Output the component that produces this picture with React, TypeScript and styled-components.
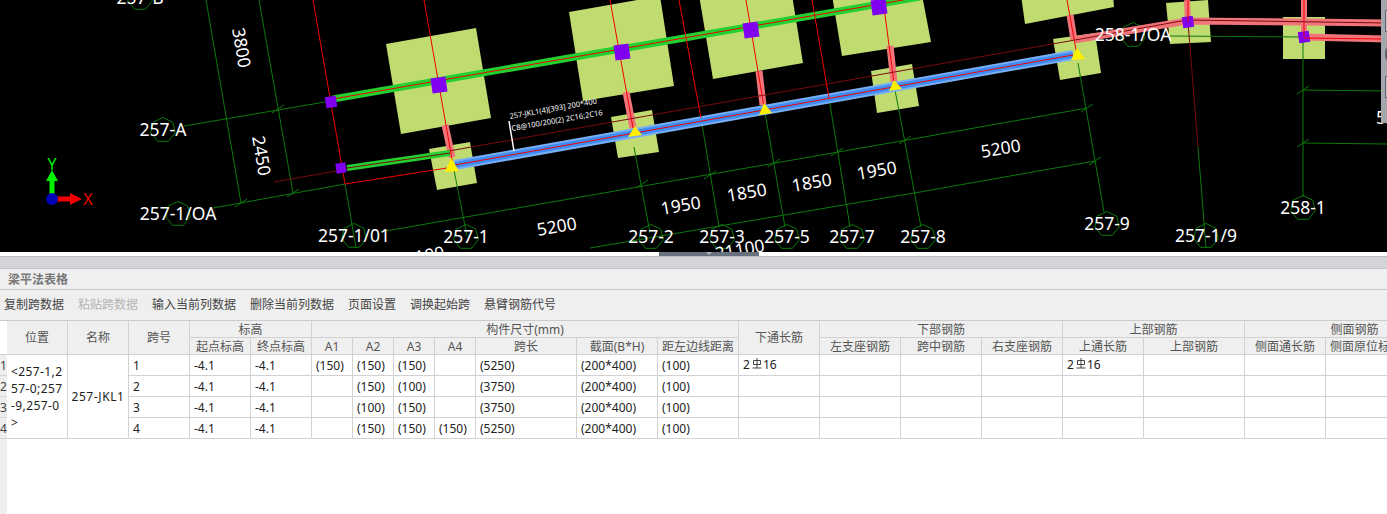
import styled, { createGlobalStyle } from "styled-components";

type Pt = [number, number];

const GREEN = "#0c780c";
const PAD = "#c0dc70";
const RED = "#f00000";
const DARK_RED = "#7a0a0a";
const PINK = "#f0747a";
const PURPLE = "#8000f0";

const pads: Pt[][] = [
  [[386, 44], [476, 28], [491, 118], [401, 134]],
  [[429, 149], [470, 142], [477, 183], [437, 190]],
  [[569, 12], [660, -4], [674, 86], [583, 101]],
  [[611, 117], [652, 110], [659, 152], [618, 158]],
  [[699, -5], [792, -5], [803, 63], [713, 79]],
  [[871, 71], [912, 64], [919, 106], [877, 113]],
  [[832, -5], [922, -5], [931, 42], [842, 56]],
  [[1021, -5], [1113, -5], [1114, 7], [1025, 24]],
  [[1053, 39], [1095, 33], [1101, 73], [1060, 80]],
  [[1166, 3], [1208, 0], [1211, 42], [1170, 44]],
  [[1283, 17], [1325, 17], [1325, 59], [1283, 59]],
];

const greenLines: number[][] = [
  [206, 0, 241, 203],
  [259, 0, 293, 193],
  [184, 126, 325, 102],
  [213, 208, 345, 184],
  [345, 184, 356, 248],
  [453, 165, 467, 236],
  [380, 232, 907, 140],
  [907, 140, 1087, 108],
  [590, 248, 920, 192],
  [920, 192, 1095, 161],
  [634, 147, 650, 233],
  [701, 118, 719, 227],
  [764, 107, 785, 227],
  [829, 98, 850, 227],
  [895, 90, 921, 227],
  [1078, 63, 1104, 212],
  [1198, 147, 1206, 248],
  [1170, 36, 1304, 37],
  [1303, 37, 1303, 197],
  [1303, 90, 1387, 91],
  [1303, 143, 1387, 144],
];

const ticks: Pt[] = [
  [278, 109], [241, 203], [293, 193], [642, 184], [710, 175], [774, 163], [837, 152], [905, 140],
  [1087, 108], [1095, 161], [1303, 90], [1303, 143],
];

const redLines: number[][] = [
  [313, 0, 345, 184],
  [424, 0, 453, 165],
  [610, 0, 633, 128],
  [679, 0, 701, 118],
  [746, 0, 764, 107],
  [812, 0, 829, 98],
  [883, 0, 895, 90],
  [1067, 0, 1077, 55],
  [345, 184, 447, 168],
];

const darkRedLines: number[][] = [
  [274, 182, 1075, 40],
  [1075, 40, 1187, 20],
  [1187, 20, 1387, 23],
  [1188, 22, 1198, 147],
];

const pinkBeams: { points: string; width: number }[] = [
  { points: "445,125 452,157", width: 7 },
  { points: "626,92 633,128", width: 7 },
  { points: "759,71 763,105", width: 7 },
  { points: "890,46 894,82", width: 7 },
  { points: "1070,15 1074,40", width: 7 },
  { points: "1074,40 1187,21 1304,22 1387,23", width: 7 },
  { points: "1304,37 1387,39", width: 7 },
  { points: "1187,0 1188,22", width: 6 },
  { points: "1304,0 1304,37", width: 6 },
];

const columns: { x: number; y: number; s: number }[] = [
  { x: 331, y: 102, s: 11 },
  { x: 341, y: 168, s: 10 },
  { x: 439, y: 85, s: 15 },
  { x: 622, y: 52, s: 15 },
  { x: 751, y: 30, s: 15 },
  { x: 879, y: 7, s: 15 },
  { x: 1188, y: 22, s: 11 },
  { x: 1304, y: 37, s: 11 },
];

const triangles: string[] = [
  "451,158 445,172 459,171",
  "635,126 628,137 642,135",
  "764,103 759,115 772,113",
  "894,80 889,91 902,89",
  "1077,48 1071,60 1085,59",
];

const bubbles: { label: string; x: number; y: number }[] = [
  { label: "257-B", x: 140, y: -2 },
  { label: "257-A", x: 163, y: 130 },
  { label: "257-1/OA", x: 178, y: 214 },
  { label: "257-1/01", x: 354, y: 236 },
  { label: "257-1", x: 466, y: 237 },
  { label: "257-2", x: 651, y: 237 },
  { label: "257-3", x: 722, y: 237 },
  { label: "257-5", x: 787, y: 237 },
  { label: "257-7", x: 852, y: 237 },
  { label: "257-8", x: 923, y: 237 },
  { label: "257-9", x: 1107, y: 224 },
  { label: "257-1/9", x: 1206, y: 236 },
  { label: "258-1", x: 1303, y: 208 },
  { label: "258-1/OA", x: 1133, y: 35 },
];

const dimensions: { label: string; x: number; y: number; angle: number }[] = [
  { label: "3800", x: 240, y: 48, angle: 80 },
  { label: "2450", x: 260, y: 156, angle: 80 },
  { label: "5200", x: 557, y: 228, angle: -10 },
  { label: "1950", x: 681, y: 207, angle: -10 },
  { label: "1850", x: 747, y: 194, angle: -10 },
  { label: "1850", x: 812, y: 184, angle: -10 },
  { label: "1950", x: 877, y: 172, angle: -10 },
  { label: "5200", x: 1001, y: 150, angle: -10 },
  { label: "21100", x: 740, y: 251, angle: -10 },
  { label: "21100", x: 420, y: 258, angle: -10 },
];

function heptagon(cx: number, cy: number, r: number) {
  const pts: string[] = [];
  for (let i = 0; i < 7; i++) {
    const a = (i * 2 * Math.PI) / 7 - Math.PI / 2;
    pts.push(`${(cx + r * Math.cos(a)).toFixed(1)},${(cy + r * Math.sin(a)).toFixed(1)}`);
  }
  return pts.join(" ");
}

function Segments(props: { lines: number[][]; color: string; width?: number }) {
  return (
    <>
      {props.lines.map((l, i) => (
        <line key={i} x1={l[0]} y1={l[1]} x2={l[2]} y2={l[3]} stroke={props.color} strokeWidth={props.width || 1} />
      ))}
    </>
  );
}

function PlanDrawing() {
  return (
    <svg width="1387" height="252" viewBox="0 0 1387 252">
      {pads.map((p, i) => (
        <polygon key={i} points={p.map((c) => c.join(",")).join(" ")} fill={PAD} />
      ))}
      <Segments lines={greenLines} color={GREEN} />
      {ticks.map(([x, y], i) => (
        <line key={i} x1={x - 6} y1={y + 4} x2={x + 6} y2={y - 4} stroke={GREEN} />
      ))}

      {bubbles.map((b) => (
        <polygon key={b.label} points={heptagon(b.x, b.y, 12.5)} fill="none" stroke={GREEN} />
      ))}

      {pinkBeams.map((b, i) => (
        <polyline key={i} points={b.points} fill="none" stroke={PINK} strokeWidth={b.width} />
      ))}
      <Segments lines={darkRedLines} color={DARK_RED} />

      <line x1="333" y1="99" x2="920" y2="-3" stroke="#22d030" strokeWidth="7" />
      <line x1="347" y1="168" x2="450" y2="153" stroke="#22d030" strokeWidth="6" />
      <line x1="333" y1="99" x2="920" y2="-3" stroke={RED} />
      <line x1="347" y1="168" x2="450" y2="153" stroke={DARK_RED} />

      <line x1="455" y1="165" x2="1073" y2="55" stroke="#78aef5" strokeWidth="10" />
      <line x1="455" y1="165" x2="1073" y2="55" stroke="#3f8cf2" strokeWidth="6" />
      <line x1="455" y1="165" x2="1073" y2="55" stroke={RED} />

      <Segments lines={redLines} color={RED} />

      {columns.map((c, i) => (
        <rect
          key={i}
          x={c.x - c.s / 2}
          y={c.y - c.s / 2}
          width={c.s}
          height={c.s}
          fill={PURPLE}
          transform={`rotate(-8 ${c.x} ${c.y})`}
        />
      ))}
      <line x1="1188" y1="0" x2="1188" y2="22" stroke={RED} />
      <line x1="1304" y1="0" x2="1304" y2="37" stroke={RED} />
      <line x1="1304" y1="38" x2="1381" y2="39" stroke={RED} />

      {triangles.map((t, i) => (
        <polygon key={i} points={t} fill="#fff000" />
      ))}

      <g fontFamily='"Noto Sans", sans-serif' fontSize="17.5" fill="#fff">
        {bubbles.map((b) => (
          <text key={b.label} x={b.x} y={b.y + 6} textAnchor="middle">
            {b.label}
          </text>
        ))}
        {dimensions.map((d, i) => (
          <text key={i} x={d.x} y={d.y} textAnchor="middle" dominantBaseline="middle" transform={`rotate(${d.angle} ${d.x} ${d.y})`}>
            {d.label}
          </text>
        ))}
        <text x="1376" y="124">5200</text>
      </g>

      <polyline points="509,121 514,151" fill="none" stroke="#fff" strokeWidth="1.5" />
      <g fontFamily='"Noto Sans", sans-serif' fontSize="7.5" fill="#fff">
        <text transform="translate(510 119) rotate(-10)">257-JKL1(4)[393] 200*400</text>
        <text transform="translate(512 131) rotate(-10)">C8@100/200(2) 2C16;2C16</text>
      </g>

      <line x1="52" y1="194" x2="52" y2="180" stroke="#00f000" strokeWidth="5" />
      <polygon points="46,181 58,181 52,170" fill="#00f000" />
      <line x1="57" y1="199" x2="71" y2="199" stroke="#f00000" strokeWidth="5" />
      <polygon points="70,193 70,205 82,199" fill="#f00000" />
      <circle cx="52" cy="199" r="6" fill="#0000b4" />
      <g fontFamily='"Noto Sans", sans-serif' fontSize="16">
        <text x="52" y="170" textAnchor="middle" fill="#00f000">Y</text>
        <text x="88" y="205" textAnchor="middle" fill="#f00000">X</text>
      </g>
    </svg>
  );
}

function RebarMark() {
  return (
    <RebarSvg width="10" height="11" viewBox="0 0 10 11">
      <path d="M1.5 2.5H8.5V6.5H1.5ZM5 0V10M0.5 10H9.5" fill="none" stroke="#444" />
    </RebarSvg>
  );
}

const actions = [
  { label: "复制跨数据" },
  { label: "粘贴跨数据", disabled: true },
  { label: "输入当前列数据" },
  { label: "删除当前列数据" },
  { label: "页面设置" },
  { label: "调换起始跨" },
  { label: "悬臂钢筋代号" },
];

const widths = [7, 61, 61, 61, 61, 61, 41, 41, 41, 41, 101, 81, 81, 81, 81, 81, 81, 81, 101, 81, 81, 58];

const positionLines = ["<257-1,2", "57-0;257", "-9,257-0", ">"];

const spans = [
  { a1: "(150)", a2: "(150)", a3: "(150)", a4: "", len: "(5250)" },
  { a1: "", a2: "(150)", a3: "(100)", a4: "", len: "(3750)" },
  { a1: "", a2: "(100)", a3: "(150)", a4: "", len: "(3750)" },
  { a1: "", a2: "(150)", a3: "(150)", a4: "(150)", len: "(5250)" },
];

export default function App() {
  return (
    <Page>
      <GlobalStyle />
      <Canvas>
        <PlanDrawing />
        <FloatPanel>
          <PanelBox />
          <PanelKnob />
          <PanelBox />
        </FloatPanel>
      </Canvas>
      <Splitter>
        <SplitHandle>
          <SplitArrow />
        </SplitHandle>
      </Splitter>
      <DockBand />
      <TitleRow>梁平法表格</TitleRow>
      <Toolbar>
        {actions.map((a) => (
          <ToolButton key={a.label} $disabled={a.disabled}>
            {a.label}
          </ToolButton>
        ))}
      </Toolbar>
      <TableArea>
        <Grid>
          <colgroup>
            {widths.map((w, i) => (
              <col key={i} style={{ width: w }} />
            ))}
          </colgroup>
          <thead>
            <TopHeadRow>
              <Corner rowSpan={2} />
              <Th rowSpan={2}>位置</Th>
              <Th rowSpan={2}>名称</Th>
              <Th rowSpan={2}>跨号</Th>
              <Th colSpan={2}>标高</Th>
              <Th colSpan={7}>构件尺寸(mm)</Th>
              <Th rowSpan={2}>下通长筋</Th>
              <Th colSpan={3}>下部钢筋</Th>
              <Th colSpan={2}>上部钢筋</Th>
              <Th colSpan={3}>侧面钢筋</Th>
            </TopHeadRow>
            <SubHeadRow>
              <Th>起点标高</Th>
              <Th>终点标高</Th>
              <Th>A1</Th>
              <Th>A2</Th>
              <Th>A3</Th>
              <Th>A4</Th>
              <Th>跨长</Th>
              <Th>截面(B*H)</Th>
              <Th>距左边线距离</Th>
              <Th>左支座钢筋</Th>
              <Th>跨中钢筋</Th>
              <Th>右支座钢筋</Th>
              <Th>上通长筋</Th>
              <Th>上部钢筋</Th>
              <Th>侧面通长筋</Th>
              <Th>侧面原位标注</Th>
              <Th />
            </SubHeadRow>
          </thead>
          <tbody>
            {spans.map((s, i) => (
              <BodyRow key={i}>
                <RowNumber>{i + 1}</RowNumber>
                {i === 0 && (
                  <>
                    <PositionCell rowSpan={4}>
                      {positionLines.map((l) => (
                        <PositionLine key={l}>{l}</PositionLine>
                      ))}
                    </PositionCell>
                    <NameCell rowSpan={4}>257-JKL1</NameCell>
                  </>
                )}
                <Td>{i + 1}</Td>
                <Td>-4.1</Td>
                <Td>-4.1</Td>
                <Td>{s.a1}</Td>
                <Td>{s.a2}</Td>
                <Td>{s.a3}</Td>
                <Td>{s.a4}</Td>
                <Td>{s.len}</Td>
                <Td>(200*400)</Td>
                <Td>(100)</Td>
                <Td>
                  {i === 0 && (
                    <>
                      2<RebarMark />16
                    </>
                  )}
                </Td>
                <Td />
                <Td />
                <Td />
                <Td>
                  {i === 0 && (
                    <>
                      2<RebarMark />16
                    </>
                  )}
                </Td>
                <Td />
                <Td />
                <Td />
                <Td />
              </BodyRow>
            ))}
          </tbody>
        </Grid>
      </TableArea>
    </Page>
  );
}

const GlobalStyle = createGlobalStyle`
  html, body {
    margin: 0;
    padding: 0;
    background: #fff;
  }
`;

const Page = styled.div`
  width: 1387px;
  height: 514px;
  display: flex;
  flex-direction: column;
  overflow: hidden;
  background: #fff;
  font-family: "Noto Sans", "Noto Sans CJK SC", sans-serif;
  font-size: 12px;
`;

const Canvas = styled.div`
  position: relative;
  height: 252px;
  flex: none;
  background: #000;
  overflow: hidden;

  svg {
    display: block;
  }
`;

const FloatPanel = styled.div`
  position: absolute;
  top: 0;
  right: 0;
  width: 6px;
  height: 123px;
  padding: 10px 0 0 4px;
  box-sizing: border-box;
  display: flex;
  flex-direction: column;
  gap: 14px;
  background: #a3a7ac;
`;

const PanelBox = styled.div`
  width: 4px;
  height: 20px;
  border: 1px solid #5d6670;
  background: #c4c8cc;
`;

const PanelKnob = styled.div`
  width: 6px;
  height: 16px;
  border-radius: 8px 0 0 8px;
  background: #59626c;
`;

const Splitter = styled.div`
  height: 4px;
  flex: none;
  background: #fff;
`;

const SplitHandle = styled.div`
  width: 100px;
  height: 4px;
  margin-left: 659px;
  display: flex;
  justify-content: center;
  background: #68727e;
`;

const SplitArrow = styled.div`
  width: 0;
  height: 0;
  border-left: 3px solid transparent;
  border-right: 3px solid transparent;
  border-top: 3px solid #aeb4ba;
`;

const DockBand = styled.div`
  height: 12px;
  flex: none;
  box-sizing: border-box;
  background: #d3d4d8;
  border-top: 1px solid #bdbec2;
`;

const TitleRow = styled.div`
  height: 22px;
  flex: none;
  box-sizing: border-box;
  padding: 0 0 1px 8px;
  display: flex;
  align-items: center;
  color: #777;
  font-weight: 700;
  background: #efefef;
  border-top: 1px solid #c4c5c8;
  border-bottom: 1px solid #c8c8c8;
`;

const Toolbar = styled.div`
  height: 30px;
  flex: none;
  padding: 0 0 2px 4px;
  display: flex;
  align-items: center;
  gap: 14px;
  box-sizing: border-box;
  background: #efefef;
`;

const ToolButton = styled.span<{ $disabled?: boolean }>`
  color: ${(p) => (p.$disabled ? "#b4b4b4" : "#444")};
`;

const TableArea = styled.div`
  flex: 1;
  overflow: hidden;
  background: linear-gradient(to right, #eee 7px, #fff 7px);
`;

const Grid = styled.table`
  width: 1465px;
  table-layout: fixed;
  border-collapse: separate;
  border-spacing: 0;
`;

const TopHeadRow = styled.tr`
  height: 18px;

  th {
    border-top: 1px solid #ccc;
  }
`;

const SubHeadRow = styled.tr`
  height: 17px;
`;

const BodyRow = styled.tr`
  height: 21px;
`;

const Th = styled.th`
  padding: 1px 0 0;
  box-sizing: border-box;
  font-weight: 400;
  color: #555;
  line-height: 14px;
  text-align: center;
  white-space: nowrap;
  overflow: hidden;
  background: #efefef;
  border-right: 1px solid #d2d2d2;
  border-bottom: 1px solid #d2d2d2;
`;

const Corner = styled.th`
  padding: 0;
  background: #fff;
  border-bottom: 1px solid #d2d2d2;
`;

const RowNumber = styled.td`
  padding: 0;
  color: #444;
  text-align: center;
  overflow: hidden;
  background: #eee;
  border-bottom: 1px solid #d2d2d2;
`;

const Td = styled.td`
  padding: 1px 0 0 4px;
  box-sizing: border-box;
  color: #222;
  line-height: 14px;
  white-space: nowrap;
  overflow: hidden;
  background: #fff;
  border-right: 1px solid #d2d2d2;
  border-bottom: 1px solid #d2d2d2;
`;

const PositionCell = styled(Td)`
  padding: 1px 0 0 4px;
`;

const PositionLine = styled.div`
  line-height: 17px;
  letter-spacing: 0.4px;
`;

const NameCell = styled(Td)`
  text-align: center;
  padding: 1px 0 0;
  letter-spacing: 0.6px;
`;

const RebarSvg = styled.svg`
  margin: 0 1px 4px 2px;
  vertical-align: middle;
`;
